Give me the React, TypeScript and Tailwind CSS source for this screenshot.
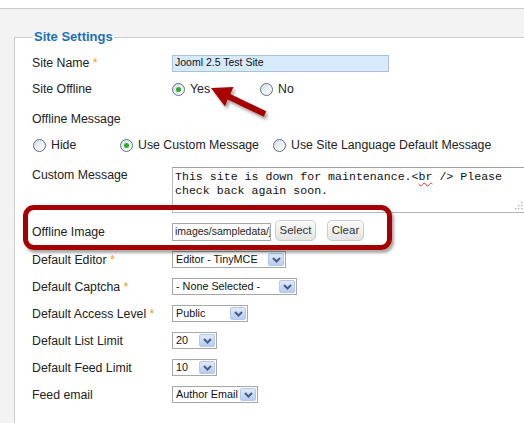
import React from "react";

function Radio({ checked = false }: { checked?: boolean }) {
  return (
    <span className="relative inline-block h-[13px] w-[13px] shrink-0 rounded-full border border-[#5d7189] bg-linear-to-br from-[#d9dfe6] to-white">
      {checked && (
        <span className="absolute left-[3px] top-[3px] h-[5px] w-[5px] rounded-full bg-[#2fa82f]" />
      )}
    </span>
  );
}

function Chevron() {
  return (
    <svg width="9" height="6" viewBox="0 0 9 6">
      <polyline points="1,1 4.5,4.5 8,1" fill="none" stroke="#4a5d80" strokeWidth="2" />
    </svg>
  );
}

function Select({ cls, text }: { cls: string; text: string }) {
  return (
    <div className={`flex h-[17px] items-center justify-between border border-[#a8a8a8] bg-white pl-[3px] pr-[1px] ${cls}`}>
      <span className="whitespace-nowrap text-[10.8px] leading-none text-[#111]">{text}</span>
      <span className="flex h-[13px] w-[16px] shrink-0 items-center justify-center rounded-[2px] border border-[#b3c8ec] bg-linear-to-b from-[#e0eafb] to-[#b5ccf3]">
        <Chevron />
      </span>
    </div>
  );
}

function Label({ text, req = false }: { text: string; req?: boolean }) {
  return (
    <div className="w-[140px] shrink-0 whitespace-nowrap text-[12.3px] leading-[16px] text-[#222]">
      {text}
      {req && <span className="text-[#ef9a22]"> *</span>}
    </div>
  );
}

function Btn({ text, cls }: { text: string; cls: string }) {
  return (
    <div className={`mb-[3px] flex h-[21px] items-center justify-center rounded-[5px] border border-[#cbcbcb] bg-linear-to-b from-[#fbfbfb] to-[#e4e4e4] text-[11.5px] text-[#333] ${cls}`}>
      {text}
    </div>
  );
}

export default function App() {
  return (
    <div
      className="relative h-[423px] w-[524px] overflow-hidden bg-white"
      style={{ fontFamily: '"Liberation Sans", Arial, sans-serif' }}
    >
      <div className="mt-[8px] h-[415px] border-t border-[#cccccc] bg-[#f3f3f3] pl-[14px] pt-[20px]">
        <fieldset className="h-[420px] border-l border-t border-[#cccccc] bg-white pl-[17px]">
          <legend className="ml-px px-px text-[13px] font-bold leading-[16px] text-[#1c6fb6]">Site Settings</legend>

          {/* Site Name */}
          <div className="mt-[5px] flex h-[26px] items-center">
            <Label text="Site Name" req />
            <div className="flex h-[17px] w-[217px] items-center border border-[#a9c1d8] bg-[#d6eafc] pl-[2px] text-[10.5px] text-[#111]">
              Jooml 2.5 Test Site
            </div>
          </div>

          {/* Site Offline */}
          <div className="flex h-[26px] items-center text-[12.3px] text-[#222]">
            <Label text="Site Offline" />
            <div className="flex w-[88px] items-center gap-[5px]">
              <Radio checked />
              <span>Yes</span>
            </div>
            <div className="flex items-center gap-[5px]">
              <Radio />
              <span>No</span>
            </div>
          </div>

          {/* Offline Message */}
          <div className="flex h-[34px] items-center">
            <Label text="Offline Message" />
          </div>

          <div className="flex h-[18px] items-center text-[12.3px] text-[#222]">
            <div className="ml-px flex w-[87px] items-center gap-[5px]">
              <Radio />
              <span>Hide</span>
            </div>
            <div className="flex w-[153px] items-center gap-[5px]">
              <Radio checked />
              <span>Use Custom Message</span>
            </div>
            <div className="flex items-center gap-[5px] whitespace-nowrap">
              <Radio />
              <span>Use Site Language Default Message</span>
            </div>
          </div>

          {/* Custom Message */}
          <div className="mt-[13px] flex h-[46px] items-start">
            <Label text="Custom Message" />
            <div className="relative h-[46px] w-[353px] shrink-0 border border-[#b9b9b9] border-t-[#a0a0a0] bg-white pl-[2px] pt-[2px]">
              <div
                className="whitespace-nowrap text-[11.6px] leading-[14px] text-[#111]"
                style={{ fontFamily: '"Liberation Mono", "Courier New", monospace' }}
              >
                This site is down for maintenance.&lt;
                <span className="underline decoration-[#d33] decoration-wavy decoration-1 underline-offset-2">br</span>
                {" />"} Please
                <br />
                check back again soon.
              </div>
              <svg className="absolute bottom-[2px] right-[1px]" width="8" height="8" viewBox="0 0 8 8">
                <rect x="6" y="0" width="1.4" height="1.4" fill="#b5b5b5" />
                <rect x="3" y="3" width="1.4" height="1.4" fill="#b5b5b5" />
                <rect x="6" y="3" width="1.4" height="1.4" fill="#b5b5b5" />
                <rect x="0" y="6" width="1.4" height="1.4" fill="#b5b5b5" />
                <rect x="3" y="6" width="1.4" height="1.4" fill="#b5b5b5" />
                <rect x="6" y="6" width="1.4" height="1.4" fill="#b5b5b5" />
              </svg>
            </div>
          </div>

          {/* Offline Image */}
          <div className="flex h-[33px] items-center pt-[5px]">
            <Label text="Offline Image" />
            <div className="flex h-[18px] w-[99px] shrink-0 items-center overflow-hidden whitespace-nowrap border border-[#a8a8a8] bg-white pl-[2px] text-[10.5px] text-[#222]">
              images/sampledata/j
            </div>
            <Btn text="Select" cls="ml-[4px] w-[41px]" />
            <Btn text="Clear" cls="ml-[11px] w-[37px]" />
          </div>

          <div className="flex h-[27px] items-center">
            <Label text="Default Editor" req />
            <Select cls="w-[114px]" text="Editor - TinyMCE" />
          </div>
          <div className="flex h-[27px] items-center">
            <Label text="Default Captcha" req />
            <Select cls="w-[125px]" text="- None Selected -" />
          </div>
          <div className="flex h-[27px] items-center">
            <Label text="Default Access Level" req />
            <Select cls="w-[76px]" text="Public" />
          </div>
          <div className="flex h-[27px] items-center">
            <Label text="Default List Limit" />
            <Select cls="w-[45px]" text="20" />
          </div>
          <div className="flex h-[27px] items-center">
            <Label text="Default Feed Limit" />
            <Select cls="w-[45px]" text="10" />
          </div>
          <div className="flex h-[27px] items-center">
            <Label text="Feed email" />
            <Select cls="w-[86px]" text="Author Email" />
          </div>
        </fieldset>
      </div>

      {/* Red highlight box */}
      <div className="pointer-events-none absolute left-[23px] top-[205px] h-[45px] w-[369px] rounded-[11px] border-[5px] border-[#a40000] shadow-[2px_3px_3px_rgba(0,0,0,0.35)]" />

      {/* Red arrow */}
      <svg className="pointer-events-none absolute left-0 top-0" width="524" height="423" viewBox="0 0 524 423">
        <defs>
          <filter id="sh" x="-20%" y="-20%" width="140%" height="140%">
            <feDropShadow dx="2" dy="3" stdDeviation="1.5" floodColor="#000" floodOpacity="0.35" />
          </filter>
        </defs>
        <polygon
          points="211,88 233.5,87 230.3,94 266.3,111.3 263.7,116.7 227.7,99.4 225,106.5"
          fill="#a80000"
          filter="url(#sh)"
        />
      </svg>
    </div>
  );
}
